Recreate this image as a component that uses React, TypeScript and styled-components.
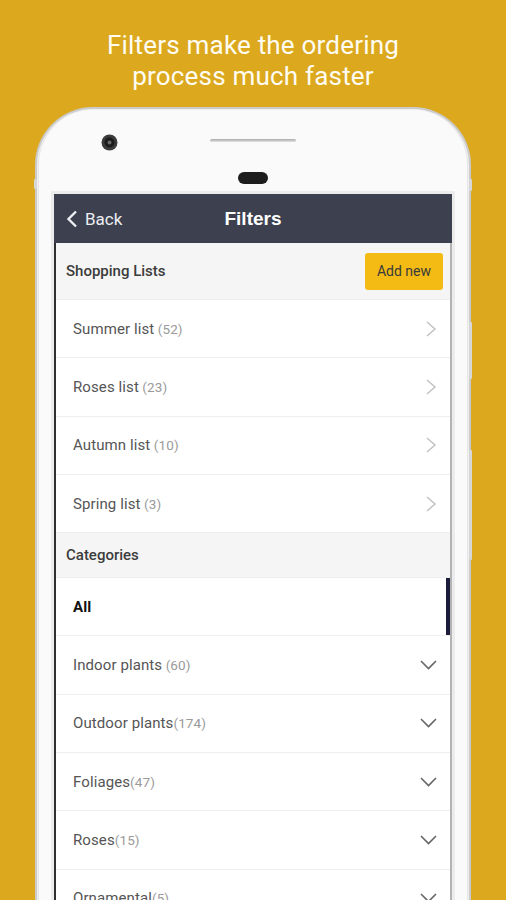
import React from "react";
import styled, { createGlobalStyle } from "styled-components";

const GlobalStyle = createGlobalStyle`
  html, body {
    margin: 0;
    padding: 0;
    height: 900px;
    overflow: hidden;
    background: #dba81e;
    font-family: Roboto, "Noto Sans", Arial, sans-serif;
  }
  * { box-sizing: border-box; }
`;

const Page = styled.div`
  width: 506px;
  height: 900px;
  overflow: hidden;
  background: #dba81e;
  display: flex;
  flex-direction: column;
  align-items: center;
`;

const Headline = styled.h1`
  margin: 30px 0 0;
  font-family: Roboto, sans-serif;
  font-weight: 400;
  font-size: 26px;
  line-height: 31px;
  color: #fffcf2;
  text-align: center;
  letter-spacing: 0.2px;
`;

const Phone = styled.div`
  position: relative;
  margin-top: 15px;
  width: 436px;
  flex-shrink: 0;
  background: #fafafa;
  border: 2px solid #cbcbcb;
  border-bottom: none;
  border-radius: 58px 58px 0 0;
  box-shadow: inset 0 0 0 1px #f0f0f0, inset 2px 0 0 #e6e6e6, inset -2px 0 0 #e6e6e6;
  padding: 0 17px;
`;

const SideButton = styled.div<{ $side: "left" | "right"; $top: number; $height: number }>`
  position: absolute;
  ${({ $side }) => ($side === "left" ? "left: -3px;" : "right: -3px;")}
  top: ${({ $top }) => $top}px;
  width: 3px;
  height: ${({ $height }) => $height}px;
  background: #d6d6d6;
  border-radius: 1px;
`;

const PhoneTop = styled.div`
  position: relative;
  height: 85px;
  display: flex;
  flex-direction: column;
  align-items: center;
`;

const Camera = styled.div`
  position: absolute;
  left: 47px;
  top: 25px;
  width: 17px;
  height: 17px;
`;

const Speaker = styled.div`
  margin-top: 30px;
  width: 86px;
  height: 3px;
  border-radius: 2px;
  background: linear-gradient(#a9a9a9, #e2e2e2);
`;

const Earpiece = styled.div`
  margin-top: 30px;
  width: 30px;
  height: 12px;
  border-radius: 6px;
  background: #1d1d1d;
`;

const Screen = styled.div`
  width: 398px;
  background: #fff;
  border-left: 2px solid #2e2e2e;
  border-right: 2px solid #b3b3b3;
  box-shadow: 0 0 0 3px #ececec;
`;

const NavBar = styled.div`
  height: 49px;
  background: #3d404f;
  display: grid;
  grid-template-columns: 1fr auto 1fr;
  align-items: center;
  margin: 0 -2px;
  padding: 0 12px;
`;

const BackButton = styled.div`
  display: flex;
  align-items: center;
  gap: 7px;
  color: #eceef2;
  font-size: 17px;
  font-family: Roboto, sans-serif;
`;

const NavTitle = styled.div`
  color: #ffffff;
  font-family: "Liberation Sans", Arial, sans-serif;
  font-weight: 700;
  font-size: 19px;
`;

const SectionHeader = styled.div<{ $height: number }>`
  height: ${({ $height }) => $height}px;
  background: #f5f5f5;
  display: flex;
  align-items: center;
  justify-content: space-between;
  padding: 0 7px 0 10px;
  border-bottom: 1px solid #efefef;
`;

const SectionTitle = styled.div`
  font-size: 15px;
  font-weight: 500;
  color: #3c3c3c;
`;

const AddButton = styled.button`
  width: 78px;
  height: 37px;
  border: none;
  border-radius: 3px;
  background: #f3bb14;
  color: #3a3a3a;
  font-family: Roboto, sans-serif;
  font-size: 14px;
  padding: 0;
`;

const Row = styled.div<{ $active?: boolean }>`
  height: 58.3px;
  display: flex;
  align-items: center;
  justify-content: space-between;
  padding: 0 13px 0 17px;
  border-bottom: 1px solid #eeeeee;
  background: #fff;
  box-shadow: ${({ $active }) => ($active ? "inset -4px 0 0 #1b1b3b" : "none")};
`;

const RowLabel = styled.div<{ $bold?: boolean }>`
  font-size: 15px;
  color: ${({ $bold }) => ($bold ? "#111" : "#555")};
  font-weight: ${({ $bold }) => ($bold ? 700 : 400)};
  letter-spacing: 0.1px;
`;

const Count = styled.span`
  font-size: 13.5px;
  color: #9a9a9a;
`;

const ChevronRight = () => (
  <svg width="12" height="16" viewBox="0 0 12 16">
    <path d="M2 1 L10 8 L2 15" fill="none" stroke="#c2c2c2" strokeWidth="1.5" />
  </svg>
);

const ChevronDown = () => (
  <svg width="17" height="10" viewBox="0 0 17 10">
    <path d="M1 1 L8.5 8.5 L16 1" fill="none" stroke="#666" strokeWidth="1.6" />
  </svg>
);

const BackChevron = () => (
  <svg width="12" height="18" viewBox="0 0 12 18">
    <path d="M10 1.5 L2.5 9 L10 16.5" fill="none" stroke="#eceef2" strokeWidth="2.4" />
  </svg>
);

const lists = [
  { name: "Summer list", count: " (52)" },
  { name: "Roses list", count: " (23)" },
  { name: "Autumn list", count: " (10)" },
  { name: "Spring list", count: " (3)" },
];

const categories = [
  { name: "Indoor plants", count: " (60)" },
  { name: "Outdoor plants", count: "(174)" },
  { name: "Foliages", count: "(47)" },
  { name: "Roses", count: "(15)" },
  { name: "Ornamental", count: "(5)" },
];

export default function App() {
  return (
    <Page>
      <GlobalStyle />
      <Headline>
        Filters make the ordering
        <br />
        process much faster
      </Headline>
      <Phone>
        <SideButton $side="left" $top={70} $height={10} />
        <SideButton $side="right" $top={70} $height={12} />
        <SideButton $side="right" $top={213} $height={57} />
        <SideButton $side="right" $top={341} $height={110} />
        <PhoneTop>
          <Camera>
            <svg width="17" height="17" viewBox="0 0 17 17">
              <circle cx="8.5" cy="8.5" r="8" fill="#3b3b3b" />
              <circle cx="8.5" cy="8.5" r="5" fill="#1b1b1b" />
              <circle cx="8.5" cy="8.5" r="2" fill="#6a6a6a" />
            </svg>
          </Camera>
          <Speaker />
          <Earpiece />
        </PhoneTop>
        <Screen>
          <NavBar>
            <BackButton>
              <BackChevron />
              Back
            </BackButton>
            <NavTitle>Filters</NavTitle>
            <div />
          </NavBar>
          <SectionHeader $height={57}>
            <SectionTitle>Shopping Lists</SectionTitle>
            <AddButton>Add new</AddButton>
          </SectionHeader>
          {lists.map((l) => (
            <Row key={l.name}>
              <RowLabel>
                {l.name}
                <Count>{l.count}</Count>
              </RowLabel>
              <ChevronRight />
            </Row>
          ))}
          <SectionHeader $height={45}>
            <SectionTitle>Categories</SectionTitle>
          </SectionHeader>
          <Row $active>
            <RowLabel $bold>All</RowLabel>
          </Row>
          {categories.map((c) => (
            <Row key={c.name}>
              <RowLabel>
                {c.name}
                <Count>{c.count}</Count>
              </RowLabel>
              <ChevronDown />
            </Row>
          ))}
        </Screen>
      </Phone>
    </Page>
  );
}
